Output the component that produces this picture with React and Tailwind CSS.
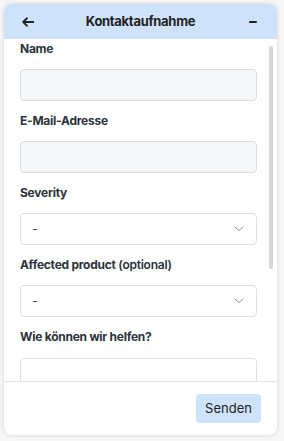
import React from "react";

const font = { fontFamily: "Inter, 'Noto Sans', sans-serif" };

function Label({ children, className = "" }) {
  return (
    <div className={"text-[12px] leading-[16px] font-bold tracking-[-0.25px] text-[#2c323a] " + className}>
      {children}
    </div>
  );
}

function TextInput() {
  return <div className="h-[32px] rounded-[4px] border border-[#d9dde1] bg-[#f6f7f8]" />;
}

function Select() {
  return (
    <div className="h-[32px] rounded-[4px] border border-[#dcdfe3] bg-white flex items-center justify-between pl-[11px] pr-[12px]">
      <span className="text-[13px] text-[#555] leading-none">-</span>
      <svg width="10" height="6" viewBox="0 0 10 6" fill="none">
        <path d="M1 1 L5 4.5 L9 1" stroke="#8a9099" strokeWidth="1" strokeLinecap="round" strokeLinejoin="round" />
      </svg>
    </div>
  );
}

export default function App() {
  return (
    <div className="w-[284px] h-[441px] bg-[#f7f7f7] pl-1 pt-1" style={font}>
      <div className="w-[273px] h-[431px] rounded-lg bg-white overflow-hidden flex flex-col shadow-[0_0_5px_rgba(0,0,0,0.14)]">
        <div className="h-[35px] shrink-0 bg-[#cfe2fc] grid grid-cols-[40px_1fr_40px] items-center">
          <div className="flex justify-start pl-[18px]">
            <svg width="12" height="10" viewBox="0 0 12 10" fill="none">
              <path d="M11.5 5 H1.5 M5 1.2 L1.2 5 L5 8.8" stroke="#222" strokeWidth="1.8" strokeLinecap="round" strokeLinejoin="round" />
            </svg>
          </div>
          <div className="text-center text-[13px] font-bold tracking-[-0.3px] text-[#222]">Kontaktaufnahme</div>
          <div className="flex justify-end pr-[20px]">
            <div className="w-[8px] h-[2px] bg-[#222] rounded-[1px]" />
          </div>
        </div>
        <div className="relative h-[342px] shrink-0 overflow-hidden">
          <div className="pl-4 w-[253px] pt-[2px] flex flex-col gap-3">
            <div>
              <Label className="mb-3">Name</Label>
              <TextInput />
            </div>
            <div>
              <Label className="mb-3">E-Mail-Adresse</Label>
              <TextInput />
            </div>
            <div>
              <Label className="mb-3">Severity</Label>
              <Select />
            </div>
            <div>
              <Label className="mb-3">Affected product <span className="font-semibold">(optional)</span></Label>
              <Select />
            </div>
            <div>
              <Label className="mb-[13px]">Wie können wir helfen?</Label>
              <div className="h-[80px] rounded-[4px] border border-[#dcdfe3] bg-white" />
            </div>
          </div>
          <div className="absolute left-[265px] top-[7px] w-[4px] h-[223px] rounded-full bg-[#d7d7d7]" />
        </div>
        <div className="flex-1 border-t border-[#e3e5e8] flex items-center justify-end pr-4">
          <div className="w-[65px] h-[29px] rounded-[4px] bg-[#d0e3fc] flex items-center justify-center text-[13px] text-[#222]">
            Senden
          </div>
        </div>
      </div>
    </div>
  );
}
